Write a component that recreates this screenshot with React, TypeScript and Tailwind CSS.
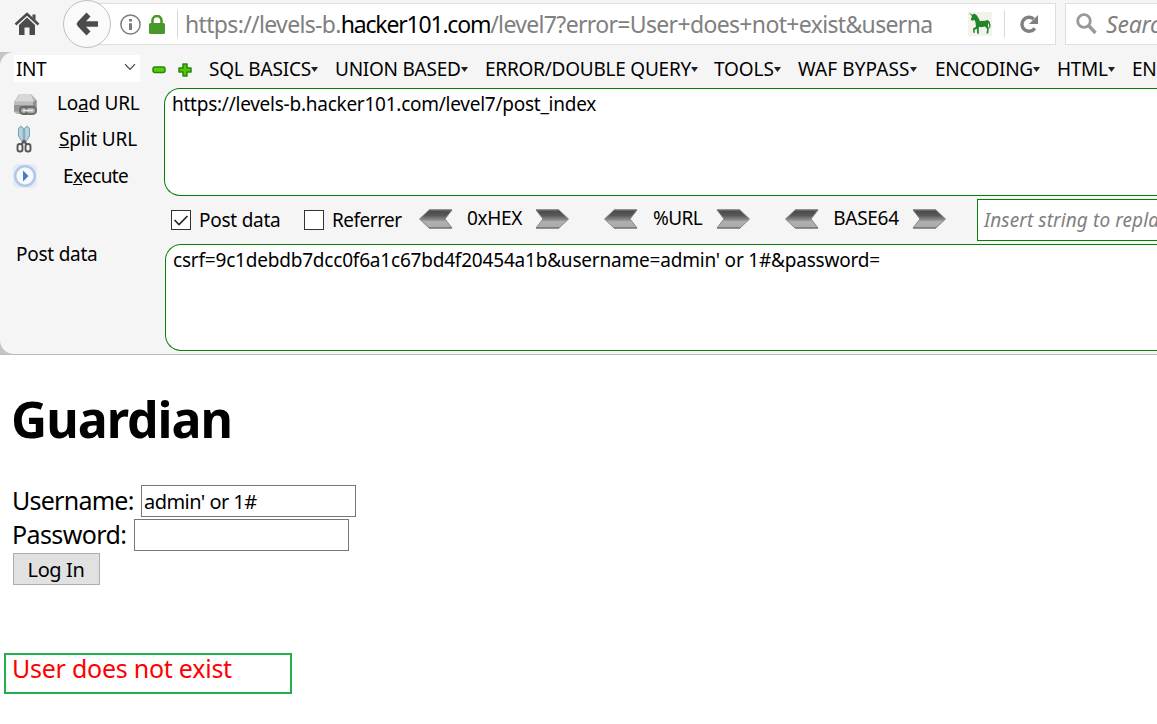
import React from "react";

const menus = [
  { label: "SQL BASICS", box: "w-[126px] tracking-[-0.2px]" },
  { label: "UNION BASED", box: "w-[150px] tracking-[-0.25px]" },
  { label: "ERROR/DOUBLE QUERY", box: "w-[229px] tracking-[-0.23px]" },
  { label: "TOOLS", box: "w-[84px] tracking-[-0.1px]" },
  { label: "WAF BYPASS", box: "w-[137px] tracking-[0.1px]" },
  { label: "ENCODING", box: "w-[122px] tracking-[-0.27px]" },
  { label: "HTML", box: "w-[75px] tracking-[-0.3px]" },
  { label: "ENCRYPT", box: "w-[110px] tracking-[-0.3px]" },
];

function Menu({ label, box }: { label: string; box: string }) {
  return (
    <div className={`flex shrink-0 items-center ${box}`}>
      <span>{label}</span>
      <svg width="7" height="5" viewBox="0 0 7 5" className="shrink-0">
        <path d="M0 0h7L3.500 5z" fill="#222" />
      </svg>
    </div>
  );
}

function Arrow({ flip = false, id }: { flip?: boolean; id: string }) {
  return (
    <svg width="34" height="20" viewBox="0 0 34 20" className={flip ? "shrink-0 -scale-x-100" : "shrink-0"}>
      <defs>
        <linearGradient id={id} x1="0" y1="0" x2="0" y2="1">
          <stop offset="0" stopColor="#484848" />
          <stop offset="0.3" stopColor="#585858" />
          <stop offset="0.55" stopColor="#8c8c8c" />
          <stop offset="0.65" stopColor="#b0b0b0" />
          <stop offset="1" stopColor="#aaa" />
        </linearGradient>
      </defs>
      <path d="M.5 10 10 1H33l-7 9 7 9H10z" fill={`url(#${id})`} stroke="#858585" />
      <path d="M10 1H33M10 19H33" stroke="#666" strokeWidth="1.200" />
    </svg>
  );
}

function Codec({ label, id, tracking }: { label: string; id: string; tracking: string }) {
  return (
    <div className="flex h-full w-full items-center justify-between">
      <Arrow id={`${id}-l`} />
      <span className={`pl-px ${tracking}`}>{label}</span>
      <Arrow id={`${id}-r`} flip />
    </div>
  );
}

function AddressBar() {
  return (
    <header className="flex h-[52px] shrink-0 items-start overflow-hidden bg-[#f5f5f5]">
      <svg width="26" height="24" viewBox="0 0 26 24" className="mt-[12px] ml-[14px] shrink-0">
        <path d="M1.500 12.500 13 2l11.500 10.500" fill="none" stroke="#4b4b4b" strokeWidth="2.500" />
        <path d="M18.500 2.500h3v6l-3-3z" fill="#4b4b4b" />
        <path d="M13 5.600 21 13v10h-5.500v-7.500h-5V23H5V13z" fill="#4b4b4b" />
      </svg>
      <div className="z-10 mt-0 -mr-[24px] ml-[23px] flex h-[48px] w-[48px] shrink-0 items-center justify-center rounded-full border border-[#bfbfbf] bg-[#fafafa]">
        <svg width="24" height="26" viewBox="0 0 24 26">
          <path d="M13.500 3.500 4.500 13l9 9.500M5.500 13H23" fill="none" stroke="#4b4b4b" strokeWidth="5.500" strokeLinejoin="round" />
        </svg>
      </div>
      <div className="mt-[3px] flex h-[42px] w-[969px] shrink-0 items-center border border-[#dedede] bg-white pl-[32px]">
        <svg width="21" height="21" viewBox="0 0 21 21" className="shrink-0">
          <circle cx="10.500" cy="10.500" r="9.600" fill="none" stroke="#7d7d7d" strokeWidth="1.500" />
          <path d="M9 5h3v2.500H9zM9 9.300h3V16H9z" fill="#7d7d7d" />
        </svg>
        <svg width="16" height="19" viewBox="0 0 16 19" className="ml-[8px] shrink-0">
          <path d="M3.500 9V5.500a4.500 4.500 0 0 1 9 0V9" fill="none" stroke="#4a9928" strokeWidth="2.600" />
          <rect x="0" y="8" width="16" height="11" rx="1.500" fill="#4a9928" />
        </svg>
        <div className="ml-[12px] h-[28px] w-px shrink-0 bg-[#d9d9d9]" />
        <div className="ml-[7px] w-[773px] shrink-0 whitespace-nowrap text-[23px] tracking-[-0.66px] text-[#808080]">
          https://levels-b.<span className="tracking-[-1.2px] text-black">hacker101.com</span>/level7?error=User+does+not+exist&amp;userna
        </div>
        <svg width="24" height="24" viewBox="0 0 24 24" className="mt-[-1px] ml-[10px] shrink-0 bg-[#f3f3ec]">
          <path
            d="M.8.800 4.500 2.800 6 1.500 8.500 3 10.500 6l1.500 3 5-.3 2.500-.7 2 1.500 1 3.500-.3 3-.9.500-.3-4-.8-1.500-.3 3 1 2.500-.7 5h-1.800l.8-4.500-2.200-2.500-3.500.8-2.300-.5-.5 2 .3 5H9.200l-.4-5-2.300 1.200.5 2.800H5.300L5 16.500l3-1.800-.5-4.200-1-2.500-2.500.8L2.800 7.500 4 4z"
            fill="#23852b"
          />
        </svg>
        <div className="ml-[12px] h-[28px] w-px shrink-0 bg-[#d9d9d9]" />
        <svg width="19" height="20" viewBox="0 0 19 20" className="ml-[15px] shrink-0">
          <path d="M14.800 14.200A7 7 0 1 1 13.600 5" fill="none" stroke="#808080" strokeWidth="3.400" />
          <path d="M18 1v9H9z" fill="#808080" />
        </svg>
      </div>
      <div className="mt-[3px] ml-[9px] flex h-[42px] w-[120px] shrink-0 items-center border border-[#dedede] bg-white pl-[10px]">
        <svg width="21" height="22" viewBox="0 0 21 22" className="shrink-0">
          <circle cx="8" cy="8" r="6.300" fill="none" stroke="#999" strokeWidth="2.800" />
          <path d="M12.500 12.500 19.500 20" stroke="#999" strokeWidth="3.400" />
        </svg>
        <span className="ml-[9px] text-[23px] tracking-[-0.2px] text-[#808080] italic">Search</span>
      </div>
    </header>
  );
}

function Checkbox({ checked = false }: { checked?: boolean }) {
  return (
    <span className="flex h-[20px] w-[20px] shrink-0 items-center justify-center border border-[#333] bg-white">
      {checked && (
        <svg width="16" height="14" viewBox="0 0 16 14">
          <path d="M1.500 7 6 11.500 14.500 3" fill="none" stroke="#222" strokeWidth="1.600" />
        </svg>
      )}
    </span>
  );
}

function HackBar() {
  return (
    <section className="h-[303px] shrink-0 overflow-hidden border-b border-[#bdbdbd] bg-[#c4c4c4] text-[19px] whitespace-nowrap">
      <div className="flex h-[302px] flex-col rounded-l-[14px] bg-[#f5f5f5]">
        <div className="flex h-[36px] shrink-0 items-center">
          <div className="mt-[-3px] ml-[14px] flex h-[27px] w-[126px] shrink-0 items-center justify-between bg-white pr-[4px] pl-[2px]">
            <span className="mt-[2px] tracking-[-0.5px]">INT</span>
            <svg width="12" height="8" viewBox="0 0 12 8" className="mt-[-3px]">
              <path d="M1 1.200 6 6.500l5-5.300" fill="none" stroke="#444" strokeWidth="1.200" />
            </svg>
          </div>
          <svg width="14" height="8" viewBox="0 0 14 8" className="mt-[-1px] ml-[12px] shrink-0">
            <rect x="1" y="1" width="12" height="5.500" rx="2" fill="#55cf05" stroke="#28850c" strokeWidth="1.500" />
          </svg>
          <svg width="14" height="14" viewBox="0 0 14 14" className="mt-[-1px] ml-[12px] shrink-0">
            <path d="M5 1h4v4h4v4H9v4H5V9H1V5h4z" fill="#50c808" stroke="#28850c" strokeWidth="1.500" strokeLinejoin="round" />
          </svg>
          <nav className="mt-[-1px] ml-[17px] flex">
            {menus.map((m) => (
              <Menu key={m.label} {...m} />
            ))}
          </nav>
        </div>
        <div className="flex h-[108px] shrink-0">
          <div className="flex w-[164px] shrink-0 flex-col">
            <div className="flex h-[31px] items-center">
              <svg width="24" height="22" viewBox="0 0 24 22" className="mt-[2px] ml-[13px]">
                <path d="M6 .5h12.500L23.500 6v12L21 20H4l-3-2V8z" fill="#b4b4b4" />
                <path d="M6.500 1h11.500l3 6.500H2z" fill="#d8d8d8" />
                <path d="M1 8h19v3H1z" fill="#bdbdbd" />
                <path d="M1 11h19v6.500H1z" fill="#969696" />
                <path d="M20 8l3.500-2v12L20 19z" fill="#8d8d8d" />
                <rect x="7" y="13" width="10" height="7" rx="3.200" fill="#aaa" stroke="#666" strokeWidth="1.800" />
                <rect x="13" y="13" width="10" height="7" rx="3.200" fill="#aaa" stroke="#6d6d6d" strokeWidth="1.800" />
                <path d="M10 16.500h10" stroke="#e8e8e8" strokeWidth="1.800" />
              </svg>
              <span className="ml-[20px] tracking-[-0.25px]">Lo<u>a</u>d URL</span>
            </div>
            <div className="flex h-[40px] items-center">
              <svg width="16" height="28" viewBox="0 0 16 28" className="ml-[16px]">
                <path d="M2.500 4 4.500 1l2.800 2v12l-1.300 1.500L2.500 11z" fill="#b5d4e0" stroke="#7a9dac" />
                <path d="M13.500 4l-2-3-2.800 2v12l1.300 1.500 3.500-5.500z" fill="#b5d4e0" stroke="#7a9dac" />
                <path d="M6 16.500 8 14.500l2 2 1.500 3H9.500L8 18l-1.500 1.500h-2z" fill="#555" />
                <rect x="1.500" y="19" width="5" height="7.500" rx="2.300" fill="none" stroke="#555" strokeWidth="1.900" />
                <rect x="9.500" y="19" width="5" height="7.500" rx="2.300" fill="none" stroke="#555" strokeWidth="1.900" />
              </svg>
              <span className="ml-[27px] tracking-[-0.15px]"><u>S</u>plit URL</span>
            </div>
            <div className="flex h-[34px] items-center">
              <svg width="24" height="24" viewBox="0 0 24 24" className="ml-[13px]">
                <rect width="24" height="24" rx="5" fill="#e2ebf7" />
                <circle cx="12" cy="12" r="9.800" fill="#f6f9fd" stroke="#b3c8e8" strokeWidth="2.600" />
                <path d="m10 6.500 5.500 5.500-5.500 5.500z" fill="#477bc4" />
              </svg>
              <span className="ml-[26px] tracking-[-0.6px]">E<u>x</u>ecute</span>
            </div>
          </div>
          <div className="flex-1 rounded-l-[16px] border border-r-0 border-[#078007] bg-white pl-[7px] leading-[31px] tracking-[-0.25px]">
            https://levels-b.hacker101.com/level7/post_index
          </div>
        </div>
        <div className="flex h-[48px] shrink-0 items-center overflow-hidden">
          <div className="ml-[171px] flex w-[133px] shrink-0 items-center gap-[8px]">
            <Checkbox checked />
            <span className="tracking-[-0.25px]">Post data</span>
          </div>
          <div className="flex w-[115px] shrink-0 items-center gap-[8px]">
            <Checkbox />
            <span className="tracking-[-0.5px]">Referrer</span>
          </div>
          <div className="mt-[-3px] w-[150px] shrink-0"><Codec label="0xHEX" id="hex" tracking="tracking-[-0.3px]" /></div>
          <div className="mt-[-3px] ml-[35px] w-[146px] shrink-0"><Codec label="%URL" id="url" tracking="tracking-[-0.6px]" /></div>
          <div className="mt-[-3px] ml-[35px] w-[161px] shrink-0"><Codec label="BASE64" id="b64" tracking="tracking-[-0.3px]" /></div>
          <div className="ml-[31px] h-[42px] w-[200px] shrink-0 border border-[#078007] bg-white pl-[6px] leading-[41px] tracking-[0.1px] text-[#808080] italic">
            Insert string to replace
          </div>
        </div>
        <div className="flex h-[107px] shrink-0">
          <span className="w-[165px] shrink-0 pl-[16px] leading-[20px] tracking-[-0.25px]">Post data</span>
          <div className="flex-1 rounded-l-[16px] border border-r-0 border-[#078007] bg-white pl-[7px] leading-[31px] tracking-[-0.2px]">
            csrf=9c1debdb7dcc0f6a1c67bd4f20454a1b&amp;username=admin' or 1#&amp;password=
          </div>
        </div>
      </div>
    </section>
  );
}

function LoginPage() {
  return (
    <main className="flex flex-col items-start text-[25px] whitespace-nowrap">
      <h1 className="mt-[38px] ml-[11px] text-[50px] leading-[52px] font-bold tracking-[-1px]">Guardian</h1>
      <div className="mt-[40px] ml-[12px] flex h-[32px] items-center">
        <label className="mt-[-2px] w-[129px] leading-[30px] tracking-[-0.75px]">Username:</label>
        <div className="h-[32px] w-[215px] border border-[#777] pl-[2px] text-[20px] leading-[31px] tracking-[-0.55px]">admin' or 1#</div>
      </div>
      <div className="mt-[2px] ml-[12px] flex h-[32px] items-center">
        <label className="mt-[-3px] w-[122px] leading-[30px] tracking-[-0.6px]">Password:</label>
        <div className="h-[32px] w-[215px] border border-[#777]" />
      </div>
      <div className="mt-[2px] ml-[13px] h-[32px] w-[87px] border border-[#adadad] bg-[#e1e1e1] pr-px text-center text-[20px] leading-[32px] tracking-[-0.4px]">Log In</div>
      <div className="mt-[68px] ml-[4px] h-[41px] w-[288px] border-2 border-[#22b14c] pl-[6px] leading-[27px] tracking-[-0.25px] text-[#f00]">
        User does not exist
      </div>
    </main>
  );
}

export default function App() {
  return (
    <div className="flex h-[724px] w-[1157px] flex-col overflow-hidden bg-white font-['Noto_Sans',sans-serif] text-black">
      <AddressBar />
      <HackBar />
      <LoginPage />
    </div>
  );
}
